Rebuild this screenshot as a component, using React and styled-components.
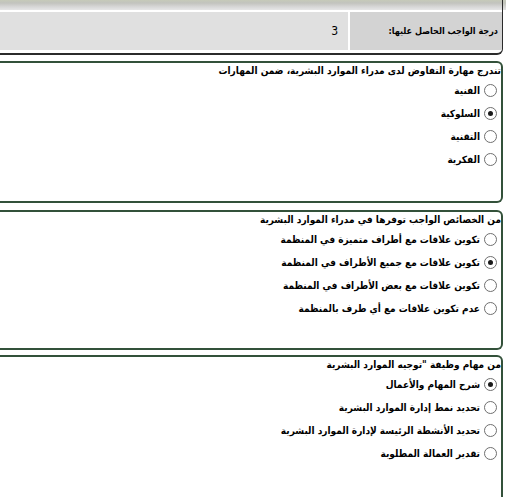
import styled, { createGlobalStyle } from "styled-components";

const GlobalStyle = createGlobalStyle`
    html, body {
        margin: 0;
        padding: 0;
        background: #ffffff;
    }
    body {
        font-family: "DejaVu Sans Condensed", "DejaVu Sans", sans-serif;
        font-size: 10px;
        color: #000000;
        overflow: hidden;
    }
`;

const questions = [
    {
        title: "تندرج مهارة التفاوض لدى مدراء الموارد البشرية، ضمن المهارات",
        height: 142,
        gap: 6,
        checked: 1,
        options: ["الفنية", "السلوكية", "التقنية", "الفكرية"],
    },
    {
        title: "من الخصائص الواجب توفرها في مدراء الموارد البشرية",
        height: 140,
        gap: 7,
        checked: 1,
        options: [
            "تكوين علاقات مع أطراف متميزة في المنظمة",
            "تكوين علاقات مع جميع الأطراف في المنظمة",
            "تكوين علاقات مع بعض الأطراف في المنظمة",
            "عدم تكوين علاقات مع أي طرف بالمنظمة",
        ],
    },
    {
        title: "من مهام وظيفة \"توجيه الموارد البشرية",
        height: 160,
        gap: 5,
        checked: 0,
        options: [
            "شرح المهام والأعمال",
            "تحديد نمط إدارة الموارد البشرية",
            "تحديد الأنشطة الرئيسة لإدارة الموارد البشرية",
            "تقدير العمالة المطلوبة",
        ],
    },
];

const App = () => {
    return (
        <>
            <GlobalStyle />
            <Page dir="rtl">
                <ScoreBox>
                    <HeaderStrip />
                    <ScoreRow>
                        <LabelCell>درجة الواجب الحاصل عليها:</LabelCell>
                        <ValueCell>3</ValueCell>
                    </ScoreRow>
                </ScoreBox>
                {questions.map((q, i) => (
                    <QuestionBox key={i} $height={q.height} $gap={q.gap}>
                        <Title>{q.title}</Title>
                        <Options>
                            {q.options.map((opt, j) => (
                                <Option key={j}>
                                    <Radio $checked={j === q.checked} />
                                    <span>{opt}</span>
                                </Option>
                            ))}
                        </Options>
                    </QuestionBox>
                ))}
            </Page>
        </>
    );
};

const Page = styled.div`
    width: 506px;
    height: 497px;
    overflow: hidden;
    box-sizing: border-box;
    padding-right: 3px;
    background: linear-gradient(to bottom, #c7cbbb 0, #c2c4bc 3px, #e4e4e4 10px, #ffffff 10px);
`;

const ScoreBox = styled.div`
    border-right: 1px solid #2b2b2b;
    border-bottom: 2px solid #2b2b2b;
    border-bottom-right-radius: 6px;
    padding-bottom: 3px;
`;

const HeaderStrip = styled.div`
    height: 10px;
    background: linear-gradient(to bottom, #c6cab9 0, #c2c3be 3px, #d8d8d8 7px, #e6e6e6 10px);
    border-bottom: 1px solid #ffffff;
`;

const ScoreRow = styled.div`
    display: flex;
    height: 38px;
    margin-top: 1px;
    gap: 2px;
    background: #ffffff;
`;

const LabelCell = styled.div`
    width: 152px;
    box-sizing: border-box;
    background: #d3d3d3;
    display: flex;
    align-items: center;
    padding-right: 4px;
    font-weight: bold;
    font-size: 9px;
    white-space: nowrap;
`;

const ValueCell = styled.div`
    flex: 1;
    background: #e0e0e0;
    display: flex;
    align-items: center;
    padding-right: 10px;
    font-size: 12px;
`;

const QuestionBox = styled.div`
    height: ${(p) => p.$height}px;
    box-sizing: border-box;
    margin-top: ${(p) => p.$gap}px;
    border: 2px solid #33513a;
    border-left: none;
    border-radius: 0 6px 6px 0;
`;

const Title = styled.div`
    font-weight: bold;
    font-size: 10px;
    line-height: 14px;
    padding-top: 1px;
    white-space: nowrap;
`;

const Options = styled.div`
    padding-top: 1px;
    display: flex;
    flex-direction: column;
`;

const Option = styled.label`
    display: flex;
    align-items: center;
    gap: 4px;
    height: 23px;
    padding-right: 4px;
    font-weight: bold;
    font-size: 10px;
    line-height: 14px;
    white-space: nowrap;
`;

const Radio = styled.span`
    width: 13px;
    height: 13px;
    box-sizing: border-box;
    border-radius: 50%;
    border: 1px solid #6f6f6f;
    background: #ffffff;
    display: flex;
    align-items: center;
    justify-content: center;
    flex-shrink: 0;

    &::after {
        content: "";
        display: ${(p) => (p.$checked ? "block" : "none")};
        width: 5px;
        height: 5px;
        border-radius: 50%;
        background: #1a1a1a;
    }
`;

export default App;
